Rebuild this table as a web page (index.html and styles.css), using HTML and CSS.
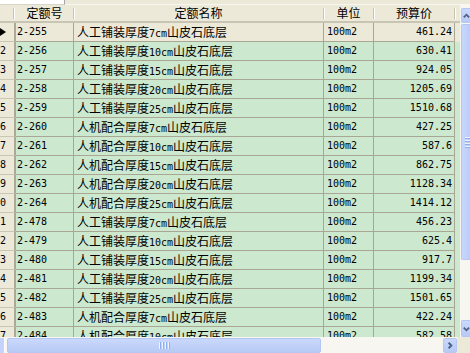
FILE: index.html
```html
<!DOCTYPE html>
<html lang="zh">
<head>
<meta charset="utf-8">
<link rel="stylesheet" href="styles.css">
</head>
<body>
<div class="top"><div class="tab"></div><div class="topfill"></div></div>
<div class="area">
  <div class="grid">
    <div class="hrow">
      <div class="hc"><span class="hl"></span><span class="sep"></span></div>
      <div class="hc"><span class="hl">定额号</span><span class="sep"></span></div>
      <div class="hc"><span class="hl">定额名称</span><span class="sep"></span></div>
      <div class="hc"><span class="hl">单位</span><span class="sep"></span></div>
      <div class="hc"><span class="hl">预算价</span><span class="sep"></span></div>
    </div>
    <div class="row sel"><div class="c ind"><span class="tri"></span></div><div class="c code">2-255</div><div class="c name">人工铺装厚度<span class="a">7cm</span>山皮石底层</div><div class="c unit">100m2</div><div class="c price">461.24</div></div>
    <div class="row"><div class="c ind">2</div><div class="c code">2-256</div><div class="c name">人工铺装厚度<span class="a">10cm</span>山皮石底层</div><div class="c unit">100m2</div><div class="c price">630.41</div></div>
    <div class="row"><div class="c ind">3</div><div class="c code">2-257</div><div class="c name">人工铺装厚度<span class="a">15cm</span>山皮石底层</div><div class="c unit">100m2</div><div class="c price">924.05</div></div>
    <div class="row"><div class="c ind">4</div><div class="c code">2-258</div><div class="c name">人工铺装厚度<span class="a">20cm</span>山皮石底层</div><div class="c unit">100m2</div><div class="c price">1205.69</div></div>
    <div class="row"><div class="c ind">5</div><div class="c code">2-259</div><div class="c name">人工铺装厚度<span class="a">25cm</span>山皮石底层</div><div class="c unit">100m2</div><div class="c price">1510.68</div></div>
    <div class="row"><div class="c ind">6</div><div class="c code">2-260</div><div class="c name">人机配合厚度<span class="a">7cm</span>山皮石底层</div><div class="c unit">100m2</div><div class="c price">427.25</div></div>
    <div class="row"><div class="c ind">7</div><div class="c code">2-261</div><div class="c name">人机配合厚度<span class="a">10cm</span>山皮石底层</div><div class="c unit">100m2</div><div class="c price">587.6</div></div>
    <div class="row"><div class="c ind">8</div><div class="c code">2-262</div><div class="c name">人机配合厚度<span class="a">15cm</span>山皮石底层</div><div class="c unit">100m2</div><div class="c price">862.75</div></div>
    <div class="row"><div class="c ind">9</div><div class="c code">2-263</div><div class="c name">人机配合厚度<span class="a">20cm</span>山皮石底层</div><div class="c unit">100m2</div><div class="c price">1128.34</div></div>
    <div class="row"><div class="c ind">0</div><div class="c code">2-264</div><div class="c name">人机配合厚度<span class="a">25cm</span>山皮石底层</div><div class="c unit">100m2</div><div class="c price">1414.12</div></div>
    <div class="row"><div class="c ind">1</div><div class="c code">2-478</div><div class="c name">人工铺装厚度<span class="a">7cm</span>山皮石底层</div><div class="c unit">100m2</div><div class="c price">456.23</div></div>
    <div class="row"><div class="c ind">2</div><div class="c code">2-479</div><div class="c name">人工铺装厚度<span class="a">10cm</span>山皮石底层</div><div class="c unit">100m2</div><div class="c price">625.4</div></div>
    <div class="row"><div class="c ind">3</div><div class="c code">2-480</div><div class="c name">人工铺装厚度<span class="a">15cm</span>山皮石底层</div><div class="c unit">100m2</div><div class="c price">917.7</div></div>
    <div class="row"><div class="c ind">4</div><div class="c code">2-481</div><div class="c name">人工铺装厚度<span class="a">20cm</span>山皮石底层</div><div class="c unit">100m2</div><div class="c price">1199.34</div></div>
    <div class="row"><div class="c ind">5</div><div class="c code">2-482</div><div class="c name">人工铺装厚度<span class="a">25cm</span>山皮石底层</div><div class="c unit">100m2</div><div class="c price">1501.65</div></div>
    <div class="row"><div class="c ind">6</div><div class="c code">2-483</div><div class="c name">人机配合厚度<span class="a">7cm</span>山皮石底层</div><div class="c unit">100m2</div><div class="c price">422.24</div></div>
    <div class="row"><div class="c ind">7</div><div class="c code">2-484</div><div class="c name">人机配合厚度<span class="a">10cm</span>山皮石底层</div><div class="c unit">100m2</div><div class="c price">582.58</div></div>
  </div>
  <div class="vs">
    <div class="btn up"><svg width="9" height="14" viewBox="0 0 9 14"><polyline points="2,8.5 5,5.5 8,8.5" fill="none" stroke="#4D6185" stroke-width="2"/></svg></div>
    <div class="vtrack">
      <div class="vthumb"><span class="grip"></span><span class="grip"></span><span class="grip"></span><span class="grip"></span></div>
    </div>
    <div class="btn down"><svg width="9" height="16" viewBox="0 0 9 16"><polyline points="2,6.5 5,9.5 8,6.5" fill="none" stroke="#4D6185" stroke-width="2"/></svg></div>
  </div>
</div>
<div class="hsrow">
  <div class="hs">
    <div class="lbtn"></div>
    <div class="hthumb"><span class="hgrip"></span><span class="hgrip"></span><span class="hgrip"></span><span class="hgrip"></span></div>
    <div class="htrack"></div>
    <div class="btn rbtn"><svg width="13" height="15" viewBox="0 0 13 15"><polyline points="5,4.5 8,7.5 5,10.5" fill="none" stroke="#4D6185" stroke-width="2"/></svg></div>
  </div>
  <div class="corner"></div>
</div>
</body>
</html>
```

FILE: styles.css
```css
* { box-sizing: border-box; }
html, body { margin: 0; padding: 0; }
body {
  width: 470px;
  height: 353px;
  overflow: hidden;
  background: #ECE9D8;
  font-family: "Noto Sans CJK SC", sans-serif;
  font-size: 12px;
  color: #000;
}
.top { display: flex; height: 5px; }
.tab { width: 65px; background: #fff; border-right: 1px solid #A7A6AA; border-bottom: 1px solid #D8D6CA; }
.topfill { flex: 1; border-bottom: 1px solid #F7F6F0; }

.area { display: flex; height: 332px; }
.grid { width: 460px; background: #F4F3EE; overflow: hidden; }

.hrow {
  display: grid;
  grid-template-columns: 16px 58px 250px 50px 81px;
  height: 18px;
  background: #ECE9D8;
  border-bottom: 2px solid #C9C5B4;
}
.hc { display: flex; align-items: center; }
.hl { flex: 1; text-align: center; line-height: 16px; }
.sep { width: 2px; height: 11px; border-left: 1px solid #C7C5B2; border-right: 1px solid #fff; margin-right: -1px; }
.hc:first-child .sep { margin-right: 1px; }

.row {
  display: grid;
  grid-template-columns: 16px 58px 250px 50px 81px;
  height: 19px;
  background: #CCE8CF;
}
.row.sel { background: #ECE9D8; }
.c {
  border-right: 1px solid #A9A693;
  border-bottom: 1px solid #A9A693;
  line-height: 18px;
  white-space: nowrap;
  overflow: hidden;
}
.c.ind {
  background: #ECE9D8;
  border-right: 2px solid #ACA996;
  border-bottom: 1px solid #C9C6B4;
  font-family: "DejaVu Sans Mono", monospace;
  font-size: 10px;
  padding-left: 0;
  display: flex;
  align-items: center;
}
.tri {
  width: 0; height: 0;
  border-left: 6px solid #000;
  border-top: 4.5px solid transparent;
  border-bottom: 4.5px solid transparent;
  margin-top: 0;
}
.code, .unit, .price { font-family: "DejaVu Sans Mono", monospace; font-size: 10px; }
.code { padding-left: 1px; }
.name { padding-left: 3px; }
.unit { padding-left: 3px; }
.price { text-align: right; padding-right: 2px; }
.a { font-family: "DejaVu Sans Mono", monospace; font-size: 10px; }

.vs { width: 10px; display: flex; flex-direction: column; background: #F7F6F1; padding-top: 3px; padding-left: 1px; }
.btn {
  background: linear-gradient(to bottom, #CAD8FC, #B7CAF5);
  border: 1px solid #B4C7F4;
  border-radius: 2px;
  display: flex;
  align-items: center;
  justify-content: center;
}
.up { height: 15px; border-right: none; border-radius: 2px 0 0 2px; }
.down { height: 17px; border-right: none; border-radius: 2px 0 0 2px; margin-top: 1px; }
.vtrack { flex: 1; display: flex; flex-direction: column; padding-top: 1px; }
.vthumb {
  height: 236px;
  background: linear-gradient(to right, #C9D7FC, #BACCF7);
  border: 1px solid #B4C7F4;
  border-right: none;
  border-radius: 2px 0 0 2px;
  display: flex;
  flex-direction: column;
  justify-content: center;
  padding-left: 3px;
  gap: 1px;
}
.grip { display: block; width: 5px; height: 1px; background: #EEF4FE; box-shadow: 0 1px 0 #8CB0F8; margin-bottom: 1px; }

.hsrow { display: flex; height: 16px; }
.hs { width: 457px; display: flex; background: #F7F6F1; padding-top: 1px; }
.lbtn { width: 5px; background: #C3D3FB; border-right: 1px solid #fff; margin-right: 2px; }
.hthumb {
  width: 314px;
  background: linear-gradient(to bottom, #CAD8FC, #B7CAF5);
  border: 1px solid #B4C7F4;
  border-radius: 2px;
  display: flex;
  align-items: center;
  justify-content: center;
  gap: 1px;
}
.hgrip { width: 1px; height: 7px; background: #EEF4FE; box-shadow: 1px 0 0 #8CB0F8; margin-right: 1px; }
.htrack { flex: 1; }
.rbtn { width: 14px; }
.corner { flex: 1; background: #ECE9D8; }
```
